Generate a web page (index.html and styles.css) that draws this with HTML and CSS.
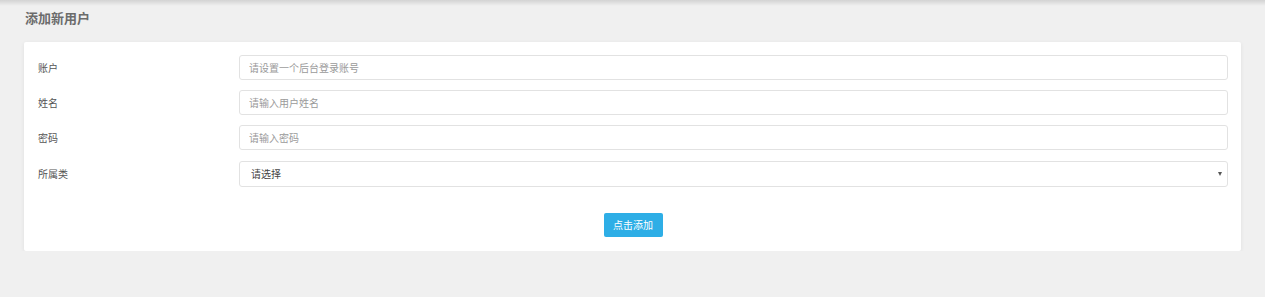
FILE: index.html
```html
<!doctype html>
<html lang=zh-CN>
  <head>
    <meta charset=utf-8 />
    <title>添加新用户</title>
    <link rel="stylesheet" href="styles.css">
  </head>
  <body>
    <div class="topbar"></div>
    <main class="page">
      <h2 class="page-title">添加新用户</h2>
      <form class="card" onsubmit="return false">
        <div class="row">
          <label for=account>账户</label>
          <input id=account type=text placeholder="请设置一个后台登录账号">
        </div>
        <div class="row">
          <label for=name>姓名</label>
          <input id=name type=text placeholder="请输入用户姓名">
        </div>
        <div class="row">
          <label for=password>密码</label>
          <input id=password type=password placeholder="请输入密码">
        </div>
        <div class="row">
          <label for=group>所属类</label>
          <div class="select-wrap">
            <select id=group>
              <option>请选择</option>
            </select>
          </div>
        </div>
        <div class="actions">
          <button type=submit class="btn">点击添加</button>
        </div>
      </form>
    </main>
  </body>
</html>
```

FILE: styles.css
```css
body {
  background: #f0f0f0;
  margin: 0;
  padding: 0;
  font-family: 'Noto Sans CJK SC', 'Noto Sans', sans-serif;
  color: #555;
}

.topbar {
  height: 6px;
  margin-bottom: -6px;
  background: linear-gradient(rgba(0, 0, 0, 0.12), rgba(0, 0, 0, 0));
}

.page {
  padding: 0 24px;
}

.page-title {
  margin: 0;
  padding: 9px 0 0 1px;
  font-size: 13px;
  line-height: 18px;
  font-weight: bold;
  color: #6b6b6b;
}

.card {
  background: #fff;
  margin-top: 15px;
  padding: 13px 13px 14px 14px;
  border-radius: 2px;
  box-shadow: 0 1px 4px rgba(0, 0, 0, 0.07);
}

.row {
  display: grid;
  grid-template-columns: 201px 1fr;
  align-items: center;
  margin-bottom: 10.2px;
}

.row label {
  font-size: 10px;
  line-height: 14px;
  color: #555;
}

.row input,
.row select {
  display: block;
  box-sizing: border-box;
  width: 100%;
  height: 25px;
  margin: 0;
  padding: 0 9px;
  border: 1px solid #e2e2e2;
  border-radius: 3px;
  font-family: inherit;
  font-size: 10px;
  color: #555;
  background: #fff;
  outline: none;
}

.row input::placeholder {
  color: #9a9a9a;
}

.select-wrap {
  position: relative;
}

.row select {
  height: 26px;
  padding: 0 11px;
  appearance: none;
  -webkit-appearance: none;
  color: #444;
}

.select-wrap::after {
  content: '';
  position: absolute;
  right: 6px;
  top: 11px;
  border-left: 2.5px solid transparent;
  border-right: 2.5px solid transparent;
  border-top: 4px solid #555;
  pointer-events: none;
}

.actions {
  display: flex;
  justify-content: center;
  padding-top: 16px;
}

.btn {
  display: block;
  width: 59px;
  height: 24px;
  padding: 0;
  border: 0;
  border-radius: 2px;
  background: #2eaee6;
  color: #fff;
  font-family: inherit;
  font-size: 10px;
}
```
